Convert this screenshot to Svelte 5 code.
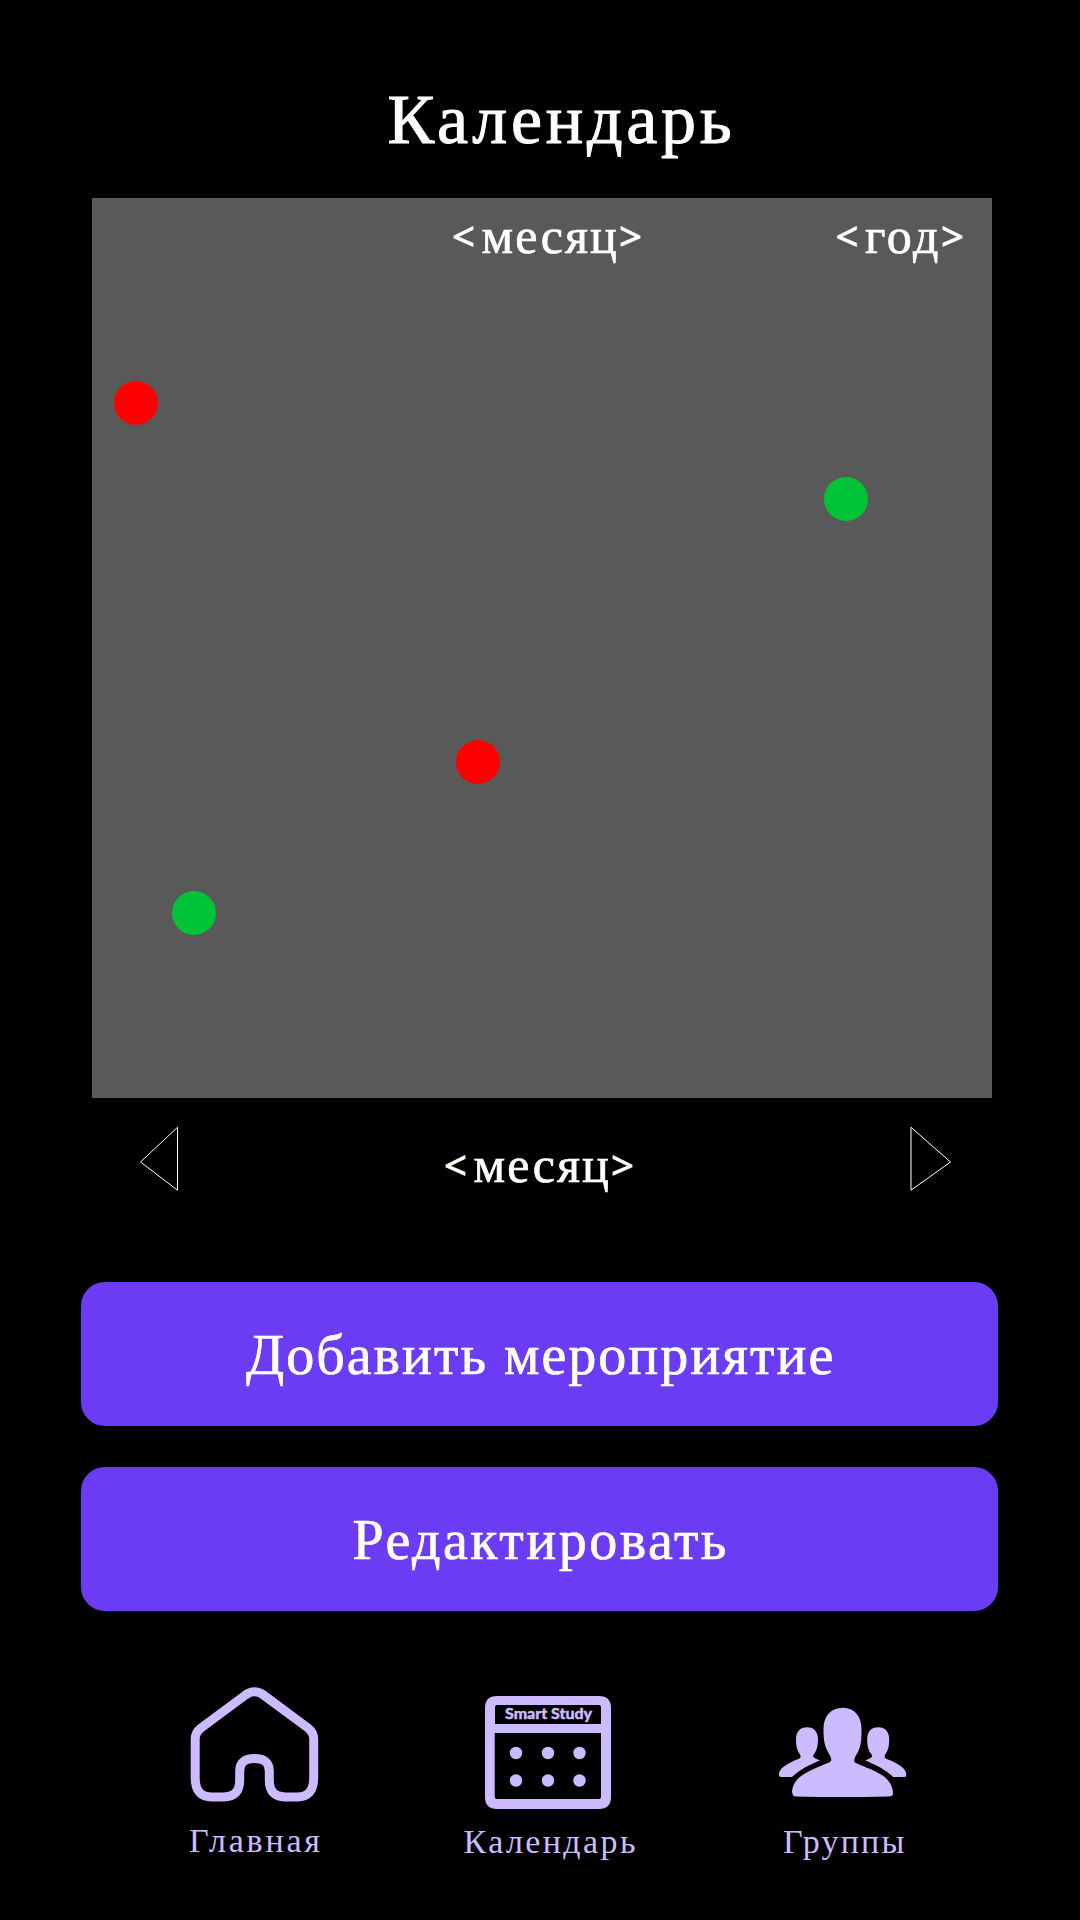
<script>
  const events = [
    { x: 44, y: 205, kind: 'busy' },
    { x: 754, y: 301, kind: 'free' },
    { x: 386, y: 564, kind: 'busy' },
    { x: 102, y: 715, kind: 'free' },
  ];
  const dots = [
    [66, 83], [98, 83], [129.5, 83],
    [66, 110.5], [98, 110.5], [129.5, 110.5],
  ];
  const member = 'M47 57.300C54 57.300 58 62 58 69C58 76 57 80 54 84C52 87 53.500 88 60 90.300C50 95 40 99 32 107H21Q18.500 107 19 103.500C20 97 29 93 37 89.500C42 88 41 86 39 83C36.500 79 36 75 36 69C36 62 40 57.300 47 57.300Z';
</script>

{#snippet placeholder(word, place)}
  <span class="label {place}"><b class="open">&lt;</b>{word}<b>&gt;</b></span>
{/snippet}

<main class="screen">
  <h1 class="title">Календарь</h1>

  <section class="calendar">
    <header class="period">
      {@render placeholder('месяц', 'month')}
      {@render placeholder('год', 'year')}
    </header>
    {#each events as e}
      <i class="event {e.kind}" style="left:{e.x}px;top:{e.y}px"></i>
    {/each}
  </section>

  <div class="switcher">
    <svg class="prev" width="40" height="68" viewBox="0 0 40 68">
      <path d="M38.500 2.300V65.200L1.500 37Z" />
    </svg>
    {@render placeholder('месяц', 'current')}
    <svg class="next" width="44" height="68" viewBox="0 0 44 68">
      <path d="M2 2.300V65.200L41.500 37Z" />
    </svg>
  </div>

  <div class="actions">
    <button class="add">Добавить мероприятие</button>
    <button class="edit">Редактировать</button>
  </div>

  <nav class="nav">
    <a class="item home" href="#home">
      <svg width="170" height="150" viewBox="0 0 170 150">
        <path class="line" d="M75.500 25Q84.500 18.500 93.500 25L138 58Q143.700 62.500 143.700 69V108Q143.700 126.900 127 126.900H115Q99.300 126.900 99.300 110V101Q99.300 88.500 84.500 88.500Q69.700 88.500 69.700 101V110Q69.700 126.900 54 126.900H42Q25.200 126.900 25.200 108V69Q25.200 62.500 31 58Z" />
      </svg>
      <span>Главная</span>
    </a>
    <a class="item cal" href="#calendar">
      <svg width="200" height="150" viewBox="0 0 200 150">
        <path fill-rule="evenodd" d="M47 26H149Q161 26 161 38V127Q161 139 149 139H47Q35 139 35 127V38Q35 26 47 26ZM47 35Q45 35 45 37V54H151V37Q151 35 149 35ZM44.700 63V127Q44.700 129 46.700 129H149Q151 129 151 127V63Z" />
        {#each dots as [cx, cy]}
          <circle {cx} {cy} r="6.200" />
        {/each}
        <text x="55" y="49" textLength="87" lengthAdjust="spacingAndGlyphs">Smart Study</text>
      </svg>
      <span>Календарь</span>
    </a>
    <a class="item groups" href="#groups">
      <svg width="170" height="150" viewBox="0 0 170 150">
        <path d="M83 37.800C94 37.800 101.500 46 101.500 59C101.500 68 101.500 75 98 82C95 87 93 90 95 92.500C101 96 112 99 120 104C129 109 133 116 133 124Q133 126.500 128 126.500Q82 127.700 36 126.500Q32 126.500 32 121C33 113 38 107 46 103C54 98.500 63 95 69 92.500C73 91 71 87 68 82C64 75 63.500 68 63.500 59C63.500 46 71 37.800 83 37.800Z" />
        <path d={member} />
        <path transform="translate(165.200 0) scale(-1 1)" d={member} />
      </svg>
      <span>Группы</span>
    </a>
  </nav>
</main>

<style>
  :global(body) { background: #000; }
  .screen {
    width: 1080px; height: 1920px; box-sizing: border-box; overflow: hidden;
    padding-top: 78px; background: #000; color: #fff;
    display: flex; flex-direction: column;
    font-family: "Liberation Serif", serif;
  }
  .title {
    margin: 0 0 36px 387.5px; height: 84px; line-height: 84px;
    font-size: 70px; font-weight: 400; letter-spacing: 3.7px;
    -webkit-text-stroke: 1px #fff;
  }
  .calendar {
    position: relative; flex: none; width: 900px; height: 900px;
    margin-left: 92px; background: #595959;
  }
  .period { display: flex; padding: 8px 0 0 360px; }
  .label {
    display: flex; flex: none; height: 60px; line-height: 60px; font-size: 50px; white-space: nowrap;
    letter-spacing: 2.1px; -webkit-text-stroke: 0.7px #fff;
  }
  .label b {
    font: 400 40px/60px "Noto Sans", sans-serif; letter-spacing: 0;
  }
  .label .open { margin-right: 6.5px; }
  .month, .current { width: 192px; }
  .year { margin-left: 191.5px; letter-spacing: 2.6px; }
  .event {
    position: absolute; width: 44px; height: 44px; margin: -22px 0 0 -22px; border-radius: 50%;
  }
  .busy { background: #f00; }
  .free { background: #00c437; }
  .switcher { display: flex; height: 184px; padding: 27px 0 0 139px; box-sizing: border-box; }
  .switcher svg { flex: none; fill: none; stroke: #fff; stroke-width: 1; }
  .current { margin: 10px 0 0 265px; }
  .next { margin-left: 273px; }
  .actions { display: flex; flex-direction: column; gap: 41px; margin-left: 81px; }
  button {
    width: 917px; height: 144px; padding: 2px 0 0; border: 0; border-radius: 24px;
    background: #6c3cf4; color: #fff; text-align: left; white-space: nowrap;
    font-family: inherit; font-size: 56px; line-height: 142px;
    -webkit-text-stroke: 0.7px #fff;
  }
  .add { padding-left: 165px; letter-spacing: 2px; }
  .edit { padding-left: 271.5px; letter-spacing: 2.5px; }
  .nav { display: flex; padding: 59px 0 0 170px; color: #ccbbff; }
  .item {
    display: flex; flex-direction: column; color: inherit; text-decoration: none;
    font-size: 34px; line-height: 40px; white-space: nowrap;
  }
  .item svg { fill: #ccbbff; }
  .item .line { fill: none; stroke: #ccbbff; stroke-width: 9; }
  .item text { font: 900 15px Lato, sans-serif; stroke: #ccbbff; stroke-width: 0.4px; }
  .home { width: 170px; }
  .home span { margin: 1px 0 0 19px; letter-spacing: 2.8px; }
  .cal { width: 200px; margin-left: 110px; }
  .cal span { margin: 2px 0 0 13.5px; letter-spacing: 2.4px; }
  .groups { margin-left: 110px; }
  .groups span { margin: 2px 0 0 23px; letter-spacing: 2.2px; }
</style>
